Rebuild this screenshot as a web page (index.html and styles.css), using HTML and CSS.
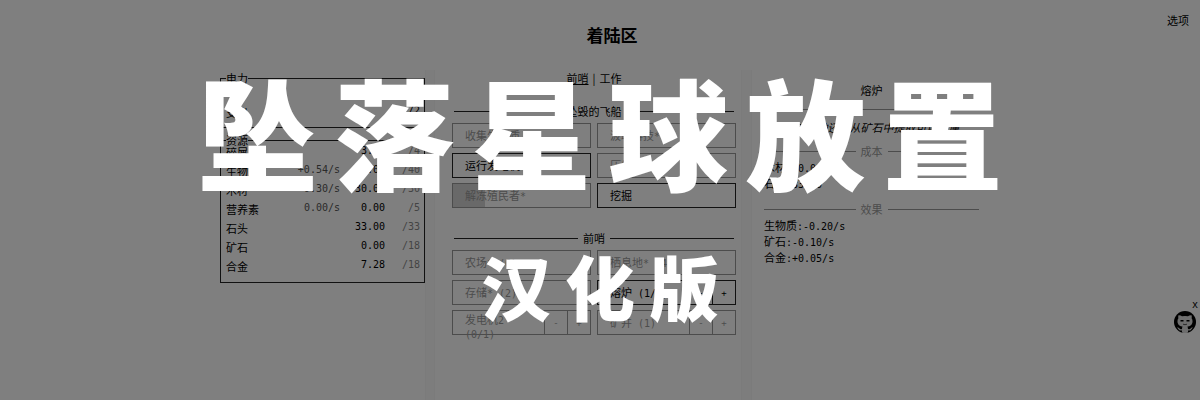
FILE: index.html
```html
<!DOCTYPE html>
<html lang="zh-CN">
<head>
<meta charset="utf-8">
<title>坠落星球放置 汉化版</title>
<link rel="stylesheet" href="styles.css">
</head>
<body>
<header class="top">
  <h2 class="zone">着陆区</h2>
  <a class="options" href="#options">选项</a>
</header>
<main class="columns">
  <section class="stocks">
    <fieldset class="box power">
      <legend>电力</legend>
      <table class="stock">
        <tr><th>支出</th><td class="rate"></td><td class="amount"></td><td class="cap dark">/2</td></tr>
      </table>
    </fieldset>
    <fieldset class="box resources">
      <legend>资源</legend>
      <table class="stock">
        <tr><th>碎屑</th><td class="rate"></td><td class="amount">3.00</td><td class="cap">/4</td></tr>
        <tr><th>生物质</th><td class="rate">+0.54/s</td><td class="amount">0.00</td><td class="cap">/40</td></tr>
        <tr><th>木材</th><td class="rate">+0.30/s</td><td class="amount">30.00</td><td class="cap">/30</td></tr>
        <tr><th>营养素</th><td class="rate">0.00/s</td><td class="amount">0.00</td><td class="cap">/5</td></tr>
        <tr><th>石头</th><td class="rate"></td><td class="amount">33.00</td><td class="cap">/33</td></tr>
        <tr><th>矿石</th><td class="rate"></td><td class="amount">0.00</td><td class="cap">/18</td></tr>
        <tr><th>合金</th><td class="rate"></td><td class="amount">7.28</td><td class="cap">/18</td></tr>
      </table>
    </fieldset>
  </section>
  <div class="gutter"></div>
  <section class="work">
    <nav class="tabs"><a class="current" href="#outpost">前哨</a><span>|</span><a href="#jobs">工作</a></nav>
    <h3 class="divider">坠毁的飞船</h3>
    <div class="actions">
      <button class="action" disabled>收集生物质</button>
      <button class="action" disabled>汲取科技<span class="num">*</span></button>
      <button class="action">运行发电机</button>
      <button class="action" disabled>压缩</button>
      <button class="action cooling" disabled>解冻殖民者<span class="num">*</span></button>
      <button class="action">挖掘</button>
    </div>
    <h3 class="divider second">前哨</h3>
    <div class="actions">
      <button class="action" disabled>农场<span class="num">* (6)</span></button>
      <button class="action" disabled>栖息地<span class="num">* (4)</span></button>
      <button class="action" disabled>存储<span class="num">* (2)</span></button>
      <div class="split"><button class="action">熔炉<span class="num"> (1/1)</span></button><button class="step">-</button><button class="step">+</button></div>
      <div class="split"><button class="action two" disabled>发电机<span class="num">2 (0/1)</span></button><button class="step" disabled>-</button><button class="step" disabled>+</button></div>
      <div class="split"><button class="action" disabled>矿井<span class="num"> (1)</span></button><button class="step" disabled>-</button><button class="step" disabled>+</button></div>
    </div>
  </section>
  <div class="gutter"></div>
  <aside class="detail">
    <h3 class="name">熔炉</h3>
    <p class="about">这座熔炉还能从矿石中提取可用金属</p>
    <h4 class="divider soft">成本</h4>
    <ul class="facts"><li>木材<span class="num">:30.00</span></li><li>石头<span class="num">:33.00</span></li></ul>
    <h4 class="divider soft effect">效果</h4>
    <ul class="facts"><li>生物质<span class="num">:-0.20/s</span></li><li>矿石<span class="num">:-0.10/s</span></li><li>合金<span class="num">:+0.05/s</span></li></ul>
  </aside>
</main>
<div class="corner">
  <button class="close">x</button>
  <a href="#source" aria-label="GitHub">
    <svg class="cat" viewBox="0 0 22 22">
      <circle cx="11" cy="11" r="11" fill="#000"/>
      <path d="M4.500 4.200Q6.500 4 8 5.200Q11 4.600 14 5.200Q15.500 4 17.500 4.200Q18 5.600 17.600 7.200Q19 9 18.300 12Q17.300 15.200 13.500 15.600Q13.800 16.300 14 18Q16 18.600 16.600 17.500Q17.500 16 19 16.500Q18 17 17.600 18Q16.800 20 14 19.500V21.500Q11 22.500 8 21.500V19.500Q5.300 20 4.300 18Q3.800 17 3 16.500Q4.500 16 5.500 17.500Q6.300 18.600 8 18Q8.100 16.400 8.500 15.600Q4.700 15.200 3.700 12Q3 9 4.400 7.200Q4 5.600 4.500 4.200Z" fill="#ddd"/>
      <path d="M6.500 9.800H9.500M12.500 9.800H15.500" stroke="#000" stroke-width="1.600"/>
      <path d="M9 13.200Q11 14.200 13 13.200" stroke="#555" fill="none"/>
    </svg>
  </a>
</div>
<div class="cover">
  <h1 class="title"><span>坠</span><span>落</span><span>星</span><span>球</span><span>放</span><span>置</span></h1>
  <p class="subtitle"><span>汉</span><span>化</span><span>版</span></p>
</div>
</body>
</html>
```
FILE: styles.css
```css
* { box-sizing: border-box; }
body {
  margin: 0;
  min-height: 100vh;
  display: flex;
  flex-direction: column;
  overflow: hidden;
  background: #fff;
  color: #000;
  font: 11px/16px "Noto Sans CJK SC", sans-serif;
}
h1, h2, h3, h4, p, ul { margin: 0; padding: 0; font-size: inherit; font-weight: normal; }
ul { list-style: none; }
a { color: inherit; text-decoration: none; }
button { font: inherit; color: inherit; background: none; cursor: pointer; }

.top { position: relative; height: 70px; padding: 23px 0 0 24px; text-align: center; }
.zone { font-size: 17px; line-height: 24px; font-weight: 700; }
.options { position: absolute; top: 12px; right: 11px; }

.columns {
  flex: 1;
  display: grid;
  grid-template-columns: 205fr 10fr 306fr 11fr 228fr;
  width: 100%;
  max-width: 760px;
  margin: 0 auto;
}
.gutter { background: #fafafa; border: solid #f6f6f6; border-width: 0 1px; }

.box { position: relative; min-width: 0; margin: 0; padding: 0 4px 0 5px; border: 1px solid #222; }
.box legend { height: 16px; padding: 0; line-height: 16px; }
.power { height: 58px; }
.power .stock { margin-top: 17px; }
.resources { margin-top: 4px; height: 151px; }
.stock { width: 100%; border-collapse: collapse; table-layout: fixed; }
.stock th, .stock td { height: 19px; padding: 0; line-height: 15px; vertical-align: top; }
.stock th { width: 46px; padding-top: 2px; text-align: left; font-weight: normal; white-space: nowrap; }
.stock td { font-family: "DejaVu Sans Mono", monospace; font-size: 10px; text-align: right; }
.resources .stock { margin-top: -5px; }
.stock .rate { width: 68px; color: #555; }
.stock .cap { width: 35px; color: #888; }
.stock .dark { color: #000; }

.work { padding: 0 5px 0 17px; }
.tabs { display: flex; justify-content: center; gap: 4px; }
.current { text-decoration: underline; }
.divider { display: flex; align-items: center; gap: 5px; margin: 17px 2px 4px; }
.divider::before, .divider::after { content: ""; flex: 1; height: 1px; background: #222; }
.second { margin-top: 22px; }
.actions { display: grid; grid-template-columns: 1fr 1fr; gap: 5px 6px; }
.action { height: 25px; padding: 0 12px; border: 1px solid #222; text-align: left; line-height: 13px; }
.action:disabled, .step:disabled { color: #999; border-color: #999; }
.cooling { background: linear-gradient(90deg, #d2d2d2 23%, transparent 23%); }
.split { display: flex; }
.split .action { flex: 1; padding-right: 0; }
.split .two { padding-top: 2px; padding-right: 30px; line-height: 12px; }
.step { width: 24px; margin-left: -1px; padding: 0; border: 1px solid #222; font: 9px "DejaVu Sans Mono", monospace; }

.detail { padding: 12px 1px 0 12px; }
.name { padding-bottom: 11px; border-bottom: 1px solid #999; text-align: center; }
.about { margin-top: 9px; text-align: center; font-style: italic; white-space: nowrap; }
.soft { margin: 8px 0 0; color: #999; }
.soft::before, .soft::after { background: #999; }
.effect { margin-top: 10px; }
.num { font-family: "DejaVu Sans Mono", monospace; font-size: 10px; line-height: 12px; }
.facts { margin-top: 0; }

.corner { position: absolute; top: 297px; right: 2px; display: flex; flex-direction: column; align-items: flex-end; }
.close { height: 14px; padding: 0; border: 0; font: 10px "DejaVu Sans Mono", monospace; }
.cat { display: block; width: 22px; height: 22px; margin-right: 2px; }

.cover {
  position: absolute;
  inset: 0;
  display: flex;
  flex-direction: column;
  align-items: center;
  background: rgba(0, 0, 0, 0.5);
  color: #fff;
  font-weight: 900;
  pointer-events: none;
}
.title { display: flex; gap: 17px; margin-top: 58px; font-size: 120px; line-height: 144px; font-weight: 900; }
.subtitle { display: flex; gap: 14px; margin-top: 42px; font-size: 70px; line-height: 84px; font-weight: 900; }
```
